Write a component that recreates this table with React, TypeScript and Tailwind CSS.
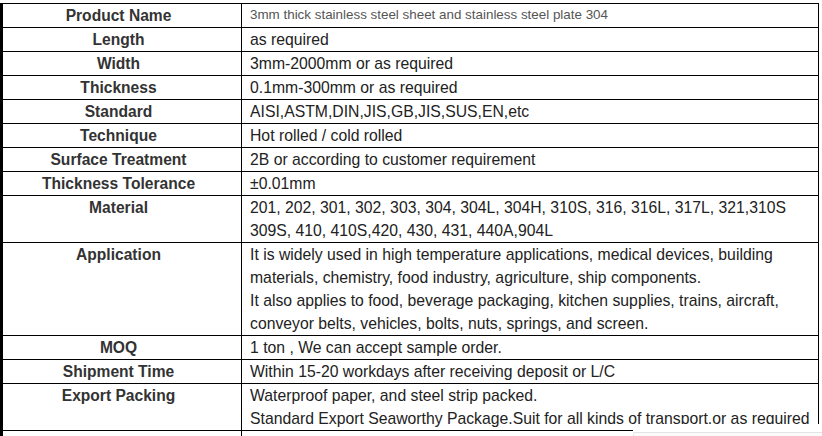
import React from "react";

const rows: { label: string; lines: string[]; small?: boolean }[] = [
  {
    label: "Product Name",
    lines: ["3mm thick stainless steel sheet and stainless steel plate 304"],
    small: true,
  },
  { label: "Length", lines: ["as required"] },
  { label: "Width", lines: ["3mm-2000mm or as required"] },
  { label: "Thickness", lines: ["0.1mm-300mm or as required"] },
  { label: "Standard", lines: ["AISI,ASTM,DIN,JIS,GB,JIS,SUS,EN,etc"] },
  { label: "Technique", lines: ["Hot rolled / cold rolled"] },
  { label: "Surface Treatment", lines: ["2B or according to customer requirement"] },
  { label: "Thickness Tolerance", lines: ["±0.01mm"] },
  {
    label: "Material",
    lines: [
      "201, 202, 301, 302, 303, 304, 304L, 304H, 310S, 316, 316L, 317L, 321,310S",
      "309S, 410, 410S,420, 430, 431, 440A,904L",
    ],
  },
  {
    label: "Application",
    lines: [
      "It is widely used in high temperature applications, medical devices, building",
      "materials, chemistry, food industry, agriculture, ship components.",
      "It also applies to food, beverage packaging, kitchen supplies, trains, aircraft,",
      "conveyor belts, vehicles, bolts, nuts, springs, and screen.",
    ],
  },
  { label: "MOQ", lines: ["1 ton , We can accept sample order."] },
  { label: "Shipment Time", lines: ["Within 15-20 workdays after receiving deposit or L/C"] },
  {
    label: "Export Packing",
    lines: [
      "Waterproof paper, and steel strip packed.",
      "Standard Export Seaworthy Package.Suit for all kinds of transport,or as required",
    ],
  },
  { label: "", lines: [""] },
];

export default function App() {
  return (
    <div
      className="relative h-[436px] w-[822px] overflow-hidden bg-white pt-[3px]"
      style={{ fontFamily: '"Liberation Sans", Arial, sans-serif' }}
    >
      <div className="w-[819px] border-t border-r border-l-[3px] border-black">
        {rows.map((row, i) => (
          <div key={i} className="flex border-b border-black">
            <div className="w-[239px] shrink-0 border-r border-black pr-[7px] text-center text-[15.6px] leading-[23px] font-bold text-[#333]">
              {row.label}
            </div>
            <div className="min-h-[23px] flex-1 pl-[8px]">
              {row.small ? (
                <div className="pt-[2px] text-[13.4px] leading-[17px] text-[#555]">{row.lines[0]}</div>
              ) : (
                row.lines.map((l, j) => (
                  <div key={j} className="whitespace-nowrap text-[15.75px] leading-[23px] text-[#222]">
                    {l}
                  </div>
                ))
              )}
            </div>
          </div>
        ))}
      </div>
      <div className="absolute top-[424px] left-[633px] right-0 bottom-0 bg-white">
        <div className="mt-[8px] h-full rounded-tl-[2px] border-t border-l border-[#e4e4e4] bg-[#fbfbfb]" />
      </div>
    </div>
  );
}
